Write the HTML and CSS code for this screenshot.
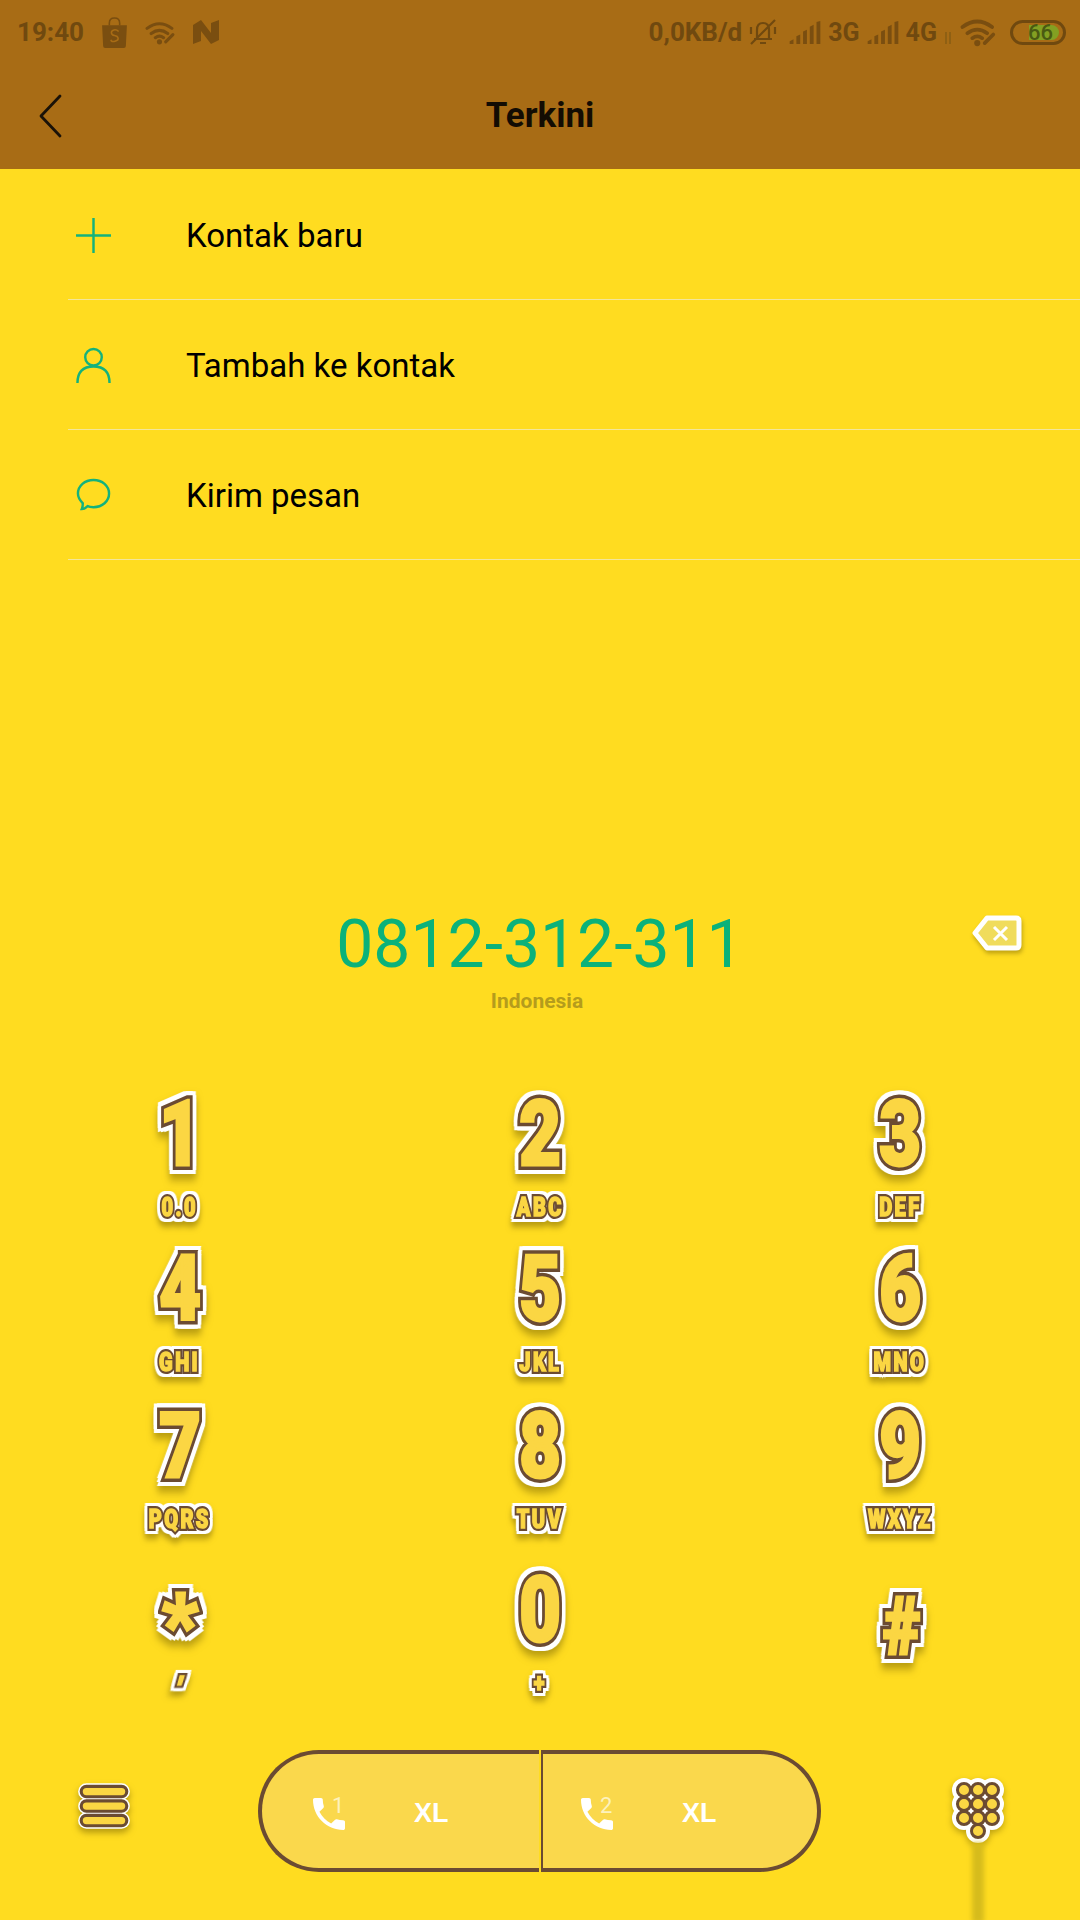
FILE: index.html
```html
<!DOCTYPE html>
<html lang="id">
<head>
<meta charset="utf-8">
<title>Terkini</title>
<link rel="stylesheet" href="styles.css">
</head>
<body>
<div class="screen">
  <header class="top">
    <div class="status">
      <div class="status-group">
        <span class="time">19:40</span>
        <svg class="ic-shop" viewBox="0 0 26 30"><path class="dark" d="M1 8h24l-1 20q0 2-2 2H4q-2 0-2-2z"/><path class="line" d="M8 8V6q0-5 5-5t5 5v2"/><path class="cut" d="M17 14q-2-2-4.500-1.500T10 15q0 2.500 3 3t3.500 2.500-3 3-4-1.500"/></svg>
        <svg class="ic-wifi" viewBox="0 0 30 24"><path class="line-w" d="M2 8q12-9 24 0M6 13q8-6 16 0M10 17q4-3 8 0"/><circle class="dark" cx="14" cy="21" r="2.500"/><path class="line-t" d="M20 21l7-7"/></svg>
        <svg class="ic-n" viewBox="0 0 28 26"><path class="dark" d="M1 6l8-5 10 13V4l8-3v20l-8 4L9 12v10l-8 3z"/></svg>
      </div>
      <div class="status-group right">
        <span class="rate">0,0KB/d</span>
        <svg class="ic-bell" viewBox="0 0 28 28"><path class="line-t2" d="M8 20V12q0-7 6-7t6 7v8M5 21h18M2 26L26 2M11 25h6M2 9v7M26 9v7"/></svg>
        <svg class="ic-sig" viewBox="0 0 32 24"><path class="dark" d="M0 24v-3l4-2v5zM7 24v-8l4-2v10zM14 24V11l4-2v15zM21 24V6l4-2v20zM28 24V1l4-1v24z"/></svg>
        <span class="net">3G</span>
        <svg class="ic-sig" viewBox="0 0 32 24"><path class="dark" d="M0 24v-3l4-2v5zM7 24v-8l4-2v10zM14 24V11l4-2v15zM21 24V6l4-2v20zM28 24V1l4-1v24z"/></svg>
        <span class="net">4G</span>
        <svg class="ic-arrows" viewBox="0 0 8 14"><path class="line-t3" d="M2 1v12M6 1v12"/></svg>
        <svg class="ic-wifi big" viewBox="0 0 30 24"><path class="line-w" d="M2 8q12-9 24 0M6 13q8-6 16 0M10 17q4-3 8 0"/><circle class="dark" cx="14" cy="21" r="2.500"/><path class="line-t" d="M20 21l7-7"/></svg>
        <div class="battery"><div class="battery-level" style="width:66%"></div><span class="battery-num">66</span></div>
      </div>
    </div>
    <div class="titlebar">
      <svg class="back" viewBox="0 0 24 44"><path d="M22 2L3 22l19 20"/></svg>
      <h1 class="title">Terkini</h1>
      <span></span>
    </div>
  </header>

  <ul class="actions">
    <li class="action">
      <svg class="action-ic" viewBox="0 0 36 36"><path d="M0 18h36M18 0v36"/></svg>
      <span>Kontak baru</span>
    </li>
    <li class="action">
      <svg class="action-ic" viewBox="0 0 36 36"><circle cx="18" cy="9.500" r="8.500"/><path d="M1.500 36q0-17 16.500-17t16.500 17"/></svg>
      <span>Tambah ke kontak</span>
    </li>
    <li class="action">
      <svg class="action-ic" viewBox="0 0 36 36"><path d="M18 2c9 0 16 6 16 14s-7 14-16 14c-2 0-4 0-6-1-1 1-4 3-6 3 1-2 1-4 1-6-3-3-5-6-5-10C2 8 9 2 18 2z"/></svg>
      <span>Kirim pesan</span>
    </li>
  </ul>

  <section class="entry">
    <div class="number">0812-312-311</div>
    <svg class="del" viewBox="0 0 50 38"><path class="del-body" d="M15 3h29q3 0 3 3v24q0 3-3 3H15L3 18z"/><path class="del-x" d="M22 12l13 13M35 12L22 25"/></svg>
    <div class="country">Indonesia</div>
  </section>

  <section class="keypad">
    <div class="key"><span class="digit" data-t="1">1</span><span class="letters" data-t="0.0">0.0</span></div>
    <div class="key"><span class="digit" data-t="2">2</span><span class="letters" data-t="ABC">ABC</span></div>
    <div class="key"><span class="digit" data-t="3">3</span><span class="letters" data-t="DEF">DEF</span></div>
    <div class="key"><span class="digit" data-t="4">4</span><span class="letters" data-t="GHI">GHI</span></div>
    <div class="key"><span class="digit" data-t="5">5</span><span class="letters" data-t="JKL">JKL</span></div>
    <div class="key"><span class="digit" data-t="6">6</span><span class="letters" data-t="MNO">MNO</span></div>
    <div class="key"><span class="digit" data-t="7">7</span><span class="letters" data-t="PQRS">PQRS</span></div>
    <div class="key"><span class="digit" data-t="8">8</span><span class="letters" data-t="TUV">TUV</span></div>
    <div class="key"><span class="digit" data-t="9">9</span><span class="letters" data-t="WXYZ">WXYZ</span></div>
    <div class="key"><span class="digit star" data-t="*">*</span><span class="letters tick" data-t="'">'</span></div>
    <div class="key"><span class="digit" data-t="0">0</span><span class="letters" data-t="+">+</span></div>
    <div class="key"><span class="digit hash" data-t="#">#</span></div>
  </section>

  <footer class="bottom">
    <svg class="menu" viewBox="0 0 56 50">
      <g class="menu-w"><rect x="3" y="3" width="50" height="16" rx="8"/><rect x="3" y="17" width="50" height="16" rx="8"/><rect x="3" y="31" width="50" height="16" rx="8"/></g>
      <g class="menu-b"><rect x="6" y="6" width="44" height="10" rx="5"/><rect x="6" y="20" width="44" height="10" rx="5"/><rect x="6" y="34" width="44" height="10" rx="5"/></g>
    </svg>
    <div class="sims">
      <button class="sim sim1"><svg class="phone" viewBox="3 3 18 18"><path d="M6.620 10.790c1.440 2.830 3.760 5.140 6.590 6.590l2.200-2.200c.27-.27.67-.36 1.020-.24 1.120.37 2.330.57 3.570.57.55 0 1 .45 1 1V20c0 .55-.45 1-1 1-9.390 0-17-7.610-17-17 0-.55.45-1 1-1h3.500c.55 0 1 .45 1 1 0 1.250.2 2.450.57 3.570.11.35.03.74-.25 1.020l-2.200 2.200z"/></svg><sup class="slot">1</sup><b class="carrier">XL</b></button>
      <button class="sim sim2"><svg class="phone" viewBox="3 3 18 18"><path d="M6.620 10.790c1.440 2.830 3.760 5.140 6.590 6.590l2.200-2.200c.27-.27.67-.36 1.020-.24 1.120.37 2.330.57 3.570.57.55 0 1 .45 1 1V20c0 .55-.45 1-1 1-9.390 0-17-7.610-17-17 0-.55.45-1 1-1h3.500c.55 0 1 .45 1 1 0 1.250.2 2.450.57 3.570.11.35.03.74-.25 1.020l-2.200 2.200z"/></svg><sup class="slot">2</sup><b class="carrier">XL</b></button>
    </div>
    <div class="dots-wrap">
      <svg class="dots" viewBox="0 0 54 66">
        <g class="dots-w"><circle cx="13" cy="13" r="12"/><circle cx="27" cy="13" r="12"/><circle cx="41" cy="13" r="12"/><circle cx="13" cy="27" r="12"/><circle cx="27" cy="27" r="12"/><circle cx="41" cy="27" r="12"/><circle cx="13" cy="41" r="12"/><circle cx="27" cy="41" r="12"/><circle cx="41" cy="41" r="12"/><circle cx="27" cy="54" r="12"/></g>
        <g class="dots-b"><circle cx="13" cy="13" r="6.500"/><circle cx="27" cy="13" r="6.500"/><circle cx="41" cy="13" r="6.500"/><circle cx="13" cy="27" r="6.500"/><circle cx="27" cy="27" r="6.500"/><circle cx="41" cy="27" r="6.500"/><circle cx="13" cy="41" r="6.500"/><circle cx="27" cy="41" r="6.500"/><circle cx="41" cy="41" r="6.500"/><circle cx="27" cy="54" r="6.500"/></g>
      </svg>
      <div class="streak"></div>
    </div>
  </footer>
</div>
</body>
</html>
```
FILE: styles.css
```css
* { box-sizing: border-box; }
html, body { margin: 0; padding: 0; }
body { background: #ffdc20; font-family: Roboto, "Liberation Sans", sans-serif; }
.screen { width: 1080px; height: 1920px; overflow: hidden; display: flex; flex-direction: column; background: #ffdc20; }

.top { height: 169px; background: #a86c15; flex: none; }
.status { height: 60px; padding: 4px 14px 0 17px; display: flex; justify-content: space-between; align-items: center; color: #70490f; font-weight: 700; }
.status-group { display: flex; align-items: center; }
.time { font-size: 26px; margin-right: 17px; }
.rate { font-size: 26px; margin-right: 7px; }
.net { font-size: 25px; margin: 0 7px; }
.dark { fill: #7a4e10; }
.line { fill: none; stroke: #7a4e10; stroke-width: 1.500; }
.line-w { fill: none; stroke: #7a4e10; stroke-width: 3; stroke-linecap: round; }
.line-t { fill: none; stroke: #7a4e10; stroke-width: 3; stroke-linecap: round; }
.line-t2 { fill: none; stroke: #70490f; stroke-width: 2.200; }
.line-t3 { fill: none; stroke: #8f6013; stroke-width: 2; }
.cut { fill: none; stroke: #a86c15; stroke-width: 1.500; }
.ic-shop { width: 27px; height: 31px; margin-right: 17px; }
.ic-wifi { width: 31px; height: 25px; margin-right: 16px; }
.ic-wifi.big { width: 37px; height: 30px; margin: 0 13px 0 8px; }
.ic-n { width: 28px; height: 26px; }
.ic-bell { width: 28px; height: 28px; margin-right: 12px; }
.ic-sig { width: 32px; height: 23px; }
.ic-arrows { width: 8px; height: 14px; margin-top: 12px; }
.battery { position: relative; width: 56px; height: 25px; border: 3px solid #70490f; border-radius: 13px; padding: 2px; }
.battery-level { height: 100%; margin-left: 30%; background: #83a022; border-radius: 0 9px 9px 0; }
.battery-num { position: absolute; left: 15px; top: -3px; font-size: 22px; font-weight: 500; line-height: 25px; color: #4a5a12; }

.titlebar { height: 109px; padding: 2px 38px 0; display: grid; grid-template-columns: 1fr auto 1fr; align-items: center; }
.back { width: 24px; height: 44px; }
.back path { fill: none; stroke: #1a1208; stroke-width: 2.800; stroke-linecap: round; stroke-linejoin: round; }
.title { margin: 0; font-size: 35px; font-weight: 700; color: #130c03; }

.actions { list-style: none; margin: 0 0 0 68px; padding: 1px 0 0; flex: none; }
.action { height: 130px; border-bottom: 1px solid #f3e69a; display: flex; align-items: center; font-size: 33px; color: #000; padding: 2px 0 0 8px; }
.action-ic { width: 35px; height: 35px; margin-right: 75px; flex: none; overflow: visible; }
.action-ic path, .action-ic circle { fill: none; stroke: #14b27c; stroke-width: 2.500; }

.entry { position: relative; margin-top: 345px; height: 124px; text-align: center; flex: none; }
.number { font-size: 66px; line-height: 80px; color: #0bb27a; font-weight: 400; }
.country { font-size: 21px; line-height: 30px; margin-top: 1px; padding-right: 6px; font-weight: 700; color: #b59c1c; }
.del { position: absolute; right: 58px; top: 10px; width: 50px; height: 38px; filter: drop-shadow(1px 3px 2px rgba(110,90,0,.45)); }
.del-body { fill: #f0dc5c; stroke: #fff; stroke-width: 5; stroke-linejoin: round; }
.del-x { fill: none; stroke: #fff; stroke-width: 3; }

.keypad { display: grid; grid-template-columns: repeat(3, 360px); grid-template-rows: 155px 157px 164px 100px; padding-top: 65px; flex: none; }
.key { display: flex; flex-direction: column; align-items: center; }
.digit, .letters {
  position: relative;
  display: block;
  font-family: Roboto, sans-serif;
  font-weight: 900;
  color: #6b4b32;
  -webkit-text-stroke-color: #6b4b32;
}
.digit::after, .letters::after {
  content: attr(data-t);
  position: absolute;
  left: 0;
  top: 0;
  color: #fbd643;
  -webkit-text-stroke-color: #fbd643;
}
.digit {
  font-size: 90px;
  line-height: 82px;
  height: 82px;
  -webkit-text-stroke-width: 10px;
  transform: scaleX(.8);
  filter: drop-shadow(4px 0 0 #fff) drop-shadow(-4px 0 0 #fff) drop-shadow(0 4px 0 #fff) drop-shadow(0 -4px 0 #fff) drop-shadow(0 6px 4px rgba(110,90,0,.5));
}
.digit::after { -webkit-text-stroke-width: 3px; }
.star { margin-top: 14px; font-size: 86px; transform: scaleX(.9); }
.hash { margin-top: 16px; font-size: 80px; transform: scaleX(.8) translateX(2px); }
.letters {
  font-size: 25px;
  line-height: 34px;
  margin-top: 15px;
  letter-spacing: 3px;
  -webkit-text-stroke-width: 6px;
  transform: scaleX(.8);
  filter: drop-shadow(3px 0 0 #fff) drop-shadow(-3px 0 0 #fff) drop-shadow(0 3px 0 #fff) drop-shadow(0 -3px 0 #fff) drop-shadow(0 5px 3px rgba(110,90,0,.5));
}
.letters::after { -webkit-text-stroke-width: 1.500px; }
.tick { margin-top: 6px; font-size: 32px; transform: skewX(-15deg); }

.bottom { margin-top: auto; flex: none; height: 170px; padding: 0 75px; display: flex; justify-content: space-between; align-items: flex-start; }
.menu { width: 58px; height: 52px; margin-top: 30px; filter: drop-shadow(0 4px 3px rgba(110,90,0,.5)); }
.menu-w rect { fill: #fff; }
.menu-b rect { fill: #fbd643; stroke: #6b4b32; stroke-width: 3; }
.sims { display: flex; gap: 2px; height: 122px; margin-right: 5px; }
.sim { height: 122px; width: 280px; background: #fad84c; border: 4px solid #6b4b32; display: flex; align-items: center; color: #fff; font-family: "Liberation Sans", sans-serif; padding: 0; }
.sim1 { border-radius: 61px 0 0 61px; border-right: 0; padding-left: 51px; width: 281px; }
.sim2 { border-radius: 0 61px 61px 0; border-left-width: 2px; padding-left: 38px; }
.phone { width: 32px; height: 32px; fill: #fff; margin-top: 6px; }
.slot { font-size: 22px; font-weight: 400; align-self: flex-start; margin: 40px 0 0 -13px; line-height: 24px; width: 12px; color: #fdf2bd; font-family: Roboto, sans-serif; }
.carrier { font-size: 27px; margin: 4px 0 0 70px; }
.dots-wrap { position: relative; width: 54px; margin-top: 27px; }
.dots { display: block; width: 54px; height: 66px; filter: drop-shadow(0 3px 3px rgba(110,90,0,.45)); }
.dots-w circle { fill: #fff; }
.dots-b circle { fill: #fbd643; stroke: #6b4b32; stroke-width: 3; }
.streak { position: absolute; left: 21px; top: 66px; width: 12px; height: 80px; background: #d6bb1c; filter: blur(2.500px); }
```
